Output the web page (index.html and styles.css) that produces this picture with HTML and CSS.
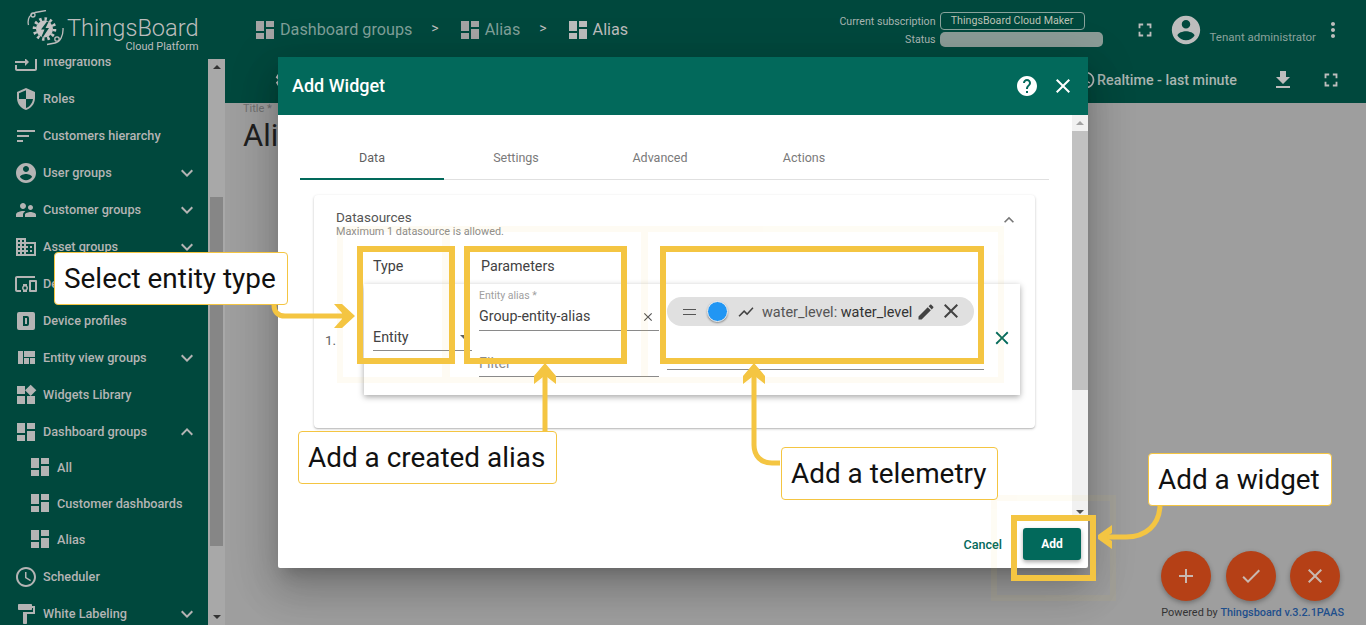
FILE: index.html
```html
<!DOCTYPE html>
<html lang="en">
<head>
    <meta charset="UTF-8">
    <title>ThingsBoard - Add Widget</title>
    <link rel="stylesheet" href="styles.css">
</head>
<body>
    <svg class="defs" width="0" height="0">
        <symbol id="i-dash" viewBox="0 0 24 24"><path d="M3 13h8V3H3v10zm0 8h8v-6H3v6zm10 0h8V11h-8v10zm0-18v6h8V3h-8z"/></symbol>
        <symbol id="i-input" viewBox="0 0 24 24"><path d="M21 3.01H3c-1.1 0-2 .9-2 2V9h2V4.99h18v14.03H3V15H1v4.01c0 1.1.9 1.98 2 1.98h18c1.1 0 2-.88 2-1.98v-14c0-1.11-.9-2-2-2zM11 16l4-4-4-4v3H1v2h10v3z"/></symbol>
        <symbol id="i-shield" viewBox="0 0 24 24"><path d="M12 1L3 5v6c0 5.55 3.84 10.74 9 12 5.16-1.26 9-6.45 9-12V5l-9-4zm0 10.99h7c-.53 4.12-3.28 7.79-7 8.94V12H5V6.3l7-3.11v8.8z"/></symbol>
        <symbol id="i-sort" viewBox="0 0 24 24"><path d="M3 18h6v-2H3v2zM3 6v2h18V6H3zm0 7h12v-2H3v2z"/></symbol>
        <symbol id="i-account" viewBox="0 0 24 24"><path d="M12 2C6.48 2 2 6.48 2 12s4.48 10 10 10 10-4.48 10-10S17.52 2 12 2zm0 3c1.66 0 3 1.34 3 3s-1.34 3-3 3-3-1.34-3-3 1.34-3 3-3zm0 14.2c-2.5 0-4.71-1.28-6-3.22.03-1.99 4-3.08 6-3.08 1.99 0 5.97 1.09 6 3.08-1.29 1.94-3.5 3.22-6 3.22z"/></symbol>
        <symbol id="i-people" viewBox="0 0 24 24"><path d="M16.5 12c1.38 0 2.49-1.12 2.49-2.5S17.88 7 16.5 7C15.12 7 14 8.12 14 9.5s1.12 2.5 2.5 2.5zM9 11c1.66 0 2.99-1.34 2.99-3S10.66 5 9 5C7.34 5 6 6.34 6 8s1.34 3 3 3zm7.5 3c-1.83 0-5.5.92-5.5 2.75V19h11v-2.25c0-1.83-3.67-2.75-5.5-2.75zM9 13c-2.33 0-7 1.17-7 3.5V19h7v-2.25c0-.85.33-2.34 2.37-3.47C10.5 13.1 9.66 13 9 13z"/></symbol>
        <symbol id="i-domain" viewBox="0 0 24 24"><path d="M12 7V3H2v18h20V7H12zM6 19H4v-2h2v2zm0-4H4v-2h2v2zm0-4H4V9h2v2zm0-4H4V5h2v2zm4 12H8v-2h2v2zm0-4H8v-2h2v2zm0-4H8V9h2v2zm0-4H8V5h2v2zm10 12h-8v-2h2v-2h-2v-2h2v-2h-2V9h8v10zm-2-8h-2v2h2v-2zm0 4h-2v2h2v-2z"/></symbol>
        <symbol id="i-devices" viewBox="0 0 24 24"><path d="M3 6h18V4H3c-1.1 0-2 .9-2 2v12c0 1.1.9 2 2 2h4v-2H3V6zm10 6H9v1.78c-.61.55-1 1.33-1 2.22s.39 1.67 1 2.22V20h4v-1.78c.61-.55 1-1.34 1-2.22s-.39-1.67-1-2.22V12zm-2 5.5c-.83 0-1.5-.67-1.5-1.5s.67-1.5 1.5-1.5 1.5.67 1.5 1.5-.67 1.5-1.5 1.5zM22 8h-6c-.5 0-1 .5-1 1v10c0 .5.5 1 1 1h6c.5 0 1-.5 1-1V9c0-.5-.5-1-1-1zm-1 10h-4v-8h4v8z"/></symbol>
        <symbol id="i-dbox" viewBox="0 0 24 24"><path fill-rule="evenodd" d="M9 7v10h4a2 2 0 0 0 2-2V9a2 2 0 0 0-2-2H9zm2 2h2v6h-2V9zM5 3h14a2 2 0 0 1 2 2v14a2 2 0 0 1-2 2H5a2 2 0 0 1-2-2V5a2 2 0 0 1 2-2z"/></symbol>
        <symbol id="i-quilt" viewBox="0 0 24 24"><path d="M10 18h5v-6h-5v6zm-6 0h5V5H4v13zm12 0h5v-6h-5v6zM10 5v6h11V5H10z"/></symbol>
        <symbol id="i-widgets" viewBox="0 0 24 24"><path d="M13 13v8h8v-8h-8zM3 21h8v-8H3v8zM3 3v8h8V3H3zm13.66-1.31L11 7.34 16.66 13l5.66-5.66-5.66-5.65z"/></symbol>
        <symbol id="i-clock" viewBox="0 0 24 24"><path d="M11.99 2C6.47 2 2 6.48 2 12s4.47 10 9.99 10C17.52 22 22 17.52 22 12S17.52 2 11.99 2zM12 20c-4.42 0-8-3.58-8-8s3.58-8 8-8 8 3.58 8 8-3.58 8-8 8zm.5-13H11v6l5.25 3.15.75-1.23-4.5-2.67z"/></symbol>
        <symbol id="i-paint" viewBox="0 0 24 24"><path d="M18 4V3c0-.55-.45-1-1-1H5c-.55 0-1 .45-1 1v4c0 .55.45 1 1 1h12c.55 0 1-.45 1-1V6h1v4H9v11c0 .55.45 1 1 1h2c.55 0 1-.45 1-1v-9h8V4h-3z"/></symbol>
        <symbol id="i-down" viewBox="0 0 24 24"><path d="M16.59 8.59L12 13.17 7.41 8.59 6 10l6 6 6-6z"/></symbol>
        <symbol id="i-up" viewBox="0 0 24 24"><path d="M12 8l-6 6 1.41 1.41L12 10.83l4.59 4.58L18 14z"/></symbol>
        <symbol id="i-full" viewBox="0 0 24 24"><path d="M7 14H5v5h5v-2H7v-3zm-2-4h2V7h3V5H5v5zm12 7h-3v2h5v-5h-2v3zM14 5v2h3v3h2V5h-5z"/></symbol>
        <symbol id="i-more" viewBox="0 0 24 24"><path d="M12 8c1.1 0 2-.9 2-2s-.9-2-2-2-2 .9-2 2 .9 2 2 2zm0 2c-1.1 0-2 .9-2 2s.9 2 2 2 2-.9 2-2-.9-2-2-2zm0 6c-1.1 0-2 .9-2 2s.9 2 2 2 2-.9 2-2-.9-2-2-2z"/></symbol>
        <symbol id="i-download" viewBox="0 0 24 24"><path d="M19 9h-4V3H9v6H5l7 7 7-7zM5 18v2h14v-2H5z"/></symbol>
        <symbol id="i-help" viewBox="0 0 24 24"><path d="M12 2C6.48 2 2 6.48 2 12s4.48 10 10 10 10-4.48 10-10S17.52 2 12 2zm1 17h-2v-2h2v2zm2.07-7.75l-.9.92C13.45 12.9 13 13.5 13 15h-2v-.5c0-1.1.45-2.1 1.17-2.83l1.24-1.26c.37-.36.59-.86.59-1.41 0-1.1-.9-2-2-2s-2 .9-2 2H8c0-2.21 1.79-4 4-4s4 1.79 4 4c0 .88-.36 1.68-.93 2.25z"/></symbol>
        <symbol id="i-close" viewBox="0 0 24 24"><path d="M19 6.41L17.59 5 12 10.59 6.41 5 5 6.41 10.59 12 5 17.59 6.41 19 12 13.41 17.59 19 19 17.59 13.41 12z"/></symbol>
        <symbol id="i-edit" viewBox="0 0 24 24"><path d="M3 17.25V21h3.75L17.81 9.94l-3.75-3.75L3 17.25zM20.71 7.04c.39-.39.39-1.02 0-1.41l-2.34-2.34c-.39-.39-1.02-.39-1.41 0l-1.83 1.83 3.75 3.75 1.83-1.83z"/></symbol>
        <symbol id="i-chart" viewBox="0 0 24 24"><path d="M3.5 18.49l6-6.01 4 4L22 6.92l-1.41-1.41-7.09 7.97-4-4L2 16.99z"/></symbol>
        <symbol id="i-add" viewBox="0 0 24 24"><path d="M19 13h-6v6h-2v-6H5v-2h6V5h2v6h6v2z"/></symbol>
        <symbol id="i-check" viewBox="0 0 24 24"><path d="M9 16.17L4.83 12l-1.42 1.41L9 19 21 7l-1.41-1.41z"/></symbol>
        <symbol id="i-gear" viewBox="0 0 24 24"><path d="M19.4 13c0-.3.1-.6.1-1s0-.7-.1-1l2.1-1.6c.2-.2.2-.4.1-.6l-2-3.5c-.1-.2-.4-.3-.6-.2l-2.5 1c-.5-.4-1.1-.7-1.7-1l-.4-2.6c0-.3-.2-.5-.5-.5h-4c-.3 0-.5.2-.5.4l-.4 2.7c-.6.2-1.1.6-1.7 1l-2.5-1c-.2-.1-.5 0-.6.2l-2 3.5c-.1.2-.1.4.1.6L4.6 11c0 .3-.1.6-.1 1s0 .7.1 1l-2.1 1.6c-.2.2-.2.4-.1.6l2 3.5c.1.2.4.3.6.2l2.5-1c.5.4 1.1.7 1.7 1l.4 2.6c0 .3.2.5.5.5h4c.3 0 .5-.2.5-.4l.4-2.7c.6-.3 1.2-.6 1.7-1l2.5 1c.2.1.5 0 .6-.2l2-3.5c.1-.2.1-.4-.1-.6L19.4 13zM12 15.5c-1.9 0-3.5-1.6-3.5-3.5s1.6-3.5 3.5-3.5 3.5 1.6 3.5 3.5-1.6 3.5-3.5 3.5z"/></symbol>
    </svg>

    <div class="app">
        <aside class="sidenav">
            <div class="logo">
                <svg class="logo-mark" viewBox="0 0 37 37">
                    <g fill="none" stroke="#bdbdbd" stroke-width="1.3">
                        <path d="M1.5 15C0 9 3 4 8 2.5L19 .5"/>
                        <circle cx="6" cy="5" r="2"/>
                        <path d="M36 18c.5 8-3 14-8 15l-8 1.5"/>
                        <circle cx="30" cy="29" r="2.2"/>
                    </g>
                    <circle cx="17.5" cy="19" r="8.5" fill="#c4c4c4"/>
                    <circle cx="17.5" cy="19" r="10" fill="none" stroke="#c4c4c4" stroke-width="3.6" stroke-dasharray="2.4 2.8"/>
                    <path d="M20 11.5l-6 8h3.5l-3 7 1.5.5 6-9h-3.5l3-6z" fill="#014a3e"/>
                </svg>
                <div class="logo-text">
                    <span class="logo-name">ThingsBoard</span>
                    <span class="logo-sub">Cloud Platform</span>
                </div>
            </div>
            <div class="side-body">
                <ul class="nav">
                    <li class="nav-row"><svg class="ic"><use href="#i-input"/></svg>Integrations</li>
                    <li class="nav-row"><svg class="ic"><use href="#i-shield"/></svg>Roles</li>
                    <li class="nav-row"><svg class="ic"><use href="#i-sort"/></svg>Customers hierarchy</li>
                    <li class="nav-row"><svg class="ic"><use href="#i-account"/></svg>User groups<svg class="ic chev"><use href="#i-down"/></svg></li>
                    <li class="nav-row"><svg class="ic"><use href="#i-people"/></svg>Customer groups<svg class="ic chev"><use href="#i-down"/></svg></li>
                    <li class="nav-row"><svg class="ic"><use href="#i-domain"/></svg>Asset groups<svg class="ic chev"><use href="#i-down"/></svg></li>
                    <li class="nav-row"><svg class="ic"><use href="#i-devices"/></svg>Device groups<svg class="ic chev"><use href="#i-down"/></svg></li>
                    <li class="nav-row"><svg class="ic"><use href="#i-dbox"/></svg>Device profiles</li>
                    <li class="nav-row"><svg class="ic"><use href="#i-quilt"/></svg>Entity view groups<svg class="ic chev"><use href="#i-down"/></svg></li>
                    <li class="nav-row"><svg class="ic"><use href="#i-widgets"/></svg>Widgets Library</li>
                    <li class="nav-row"><svg class="ic"><use href="#i-dash"/></svg>Dashboard groups<svg class="ic chev"><use href="#i-up"/></svg></li>
                    <li class="nav-row sub"><svg class="ic"><use href="#i-dash"/></svg>All</li>
                    <li class="nav-row sub"><svg class="ic"><use href="#i-dash"/></svg>Customer dashboards</li>
                    <li class="nav-row sub"><svg class="ic"><use href="#i-dash"/></svg>Alias</li>
                    <li class="nav-row"><svg class="ic"><use href="#i-clock"/></svg>Scheduler</li>
                    <li class="nav-row"><svg class="ic"><use href="#i-paint"/></svg>White Labeling<svg class="ic chev"><use href="#i-down"/></svg></li>
                </ul>
                <div class="side-scroll">
                    <span class="arrow-up"></span>
                    <div class="side-track"><div class="side-thumb"></div></div>
                    <span class="arrow-down"></span>
                </div>
            </div>
        </aside>

        <div class="main">
            <header class="topbar">
                <nav class="crumbs">
                    <svg class="ic"><use href="#i-dash"/></svg><span>Dashboard groups</span>
                    <b class="sep">&gt;</b>
                    <svg class="ic"><use href="#i-dash"/></svg><span>Alias</span>
                    <b class="sep">&gt;</b>
                    <svg class="ic lit"><use href="#i-dash"/></svg><span class="lit">Alias</span>
                </nav>
                <div class="plan">
                    <span class="plan-label">Current subscription</span>
                    <span class="plan-pill">ThingsBoard Cloud Maker</span>
                    <span class="plan-label">Status</span>
                    <span class="plan-status"></span>
                </div>
                <svg class="ic top-full"><use href="#i-full"/></svg>
                <svg class="ic top-user"><use href="#i-account"/></svg>
                <span class="top-role">Tenant administrator</span>
                <svg class="ic top-more"><use href="#i-more"/></svg>
            </header>
            <div class="toolbar">
                <svg class="ic tool-gear"><use href="#i-gear"/></svg>
                <svg class="ic tool-clock"><use href="#i-clock"/></svg>
                <span class="tool-time">Realtime - last minute</span>
                <svg class="ic tool-dl"><use href="#i-download"/></svg>
                <svg class="ic tool-full"><use href="#i-full"/></svg>
            </div>
            <div class="content">
                <div class="title-label">Title *</div>
                <div class="title-value">Alias</div>
                <div class="fabs">
                    <div class="fab-row">
                        <span class="fab"><svg class="ic"><use href="#i-add"/></svg></span>
                        <span class="fab"><svg class="ic"><use href="#i-check"/></svg></span>
                        <span class="fab"><svg class="ic"><use href="#i-close"/></svg></span>
                    </div>
                    <div class="powered">Powered by <b>Thingsboard v.3.2.1PAAS</b></div>
                </div>
            </div>
        </div>
    </div>

    <div class="modal">
        <div class="modal-head">
            <h2>Add Widget</h2>
            <svg class="ic head-help"><use href="#i-help"/></svg>
            <svg class="ic head-close"><use href="#i-close"/></svg>
        </div>
        <div class="modal-body">
            <div class="modal-pane">
                <div class="tabs">
                    <span class="tab active">Data</span>
                    <span class="tab">Settings</span>
                    <span class="tab">Advanced</span>
                    <span class="tab">Actions</span>
                </div>
                <section class="ds-card">
                    <svg class="ic ds-chev"><use href="#i-up"/></svg>
                    <div class="ds-title">Datasources</div>
                    <div class="ds-hint">Maximum 1 datasource is allowed.</div>
                    <div class="col-labels">
                        <span class="lbl-type">Type</span>
                        <span class="lbl-params">Parameters</span>
                    </div>
                    <div class="ds-line">
                        <span class="ds-index">1.</span>
                        <div class="row-card">
                            <div class="col-type">
                                <div class="field">Entity<i class="caret"></i></div>
                            </div>
                            <div class="col-params">
                                <div class="field-label">Entity alias *</div>
                                <div class="field">Group-entity-alias<svg class="ic field-x"><use href="#i-close"/></svg></div>
                                <div class="field filter">Filter</div>
                            </div>
                            <div class="col-keys">
                                <div class="chip">
                                    <span class="chip-drag"></span>
                                    <span class="chip-dot"></span>
                                    <svg class="ic chip-chart"><use href="#i-chart"/></svg>
                                    <span class="chip-text">water_level: <b>water_level</b></span>
                                    <svg class="ic chip-edit"><use href="#i-edit"/></svg>
                                    <svg class="ic chip-close"><use href="#i-close"/></svg>
                                </div>
                            </div>
                            <svg class="ic row-del"><use href="#i-close"/></svg>
                        </div>
                    </div>
                </section>
            </div>
            <div class="modal-scroll">
                <span class="arrow-up"></span>
                <div class="modal-track"><div class="modal-thumb"></div></div>
                <span class="arrow-down"></span>
            </div>
        </div>
        <div class="modal-foot">
            <span class="btn-cancel">Cancel</span>
            <span class="btn-add">Add</span>
        </div>
    </div>

    <!-- tutorial marks drawn on top of the screenshot -->
    <svg class="marks" viewBox="0 0 1366 625">
        <g class="faint">
            <rect x="340" y="229" width="105" height="151"/>
            <rect x="447" y="229" width="197" height="151"/>
            <rect x="645" y="229" width="356" height="151"/>
            <rect x="994" y="498" width="119" height="100"/>
        </g>
        <g class="boxes">
            <rect x="360" y="249" width="92" height="112"/>
            <rect x="467" y="249" width="157" height="112"/>
            <rect x="663" y="249" width="318" height="112"/>
            <rect x="1014" y="518" width="79" height="60"/>
        </g>
        <g class="lines">
            <path d="M274 305c0 7 4 11 11 11h64"/>
            <path d="M545 431v-56"/>
            <path d="M780 463h-8c-11 0-18-7-18-18v-70"/>
            <path d="M1160 506c-1 19-14 31-34 31h-24"/>
        </g>
        <g class="heads">
            <path d="M334 304h8l13 12-13 12h-8l8-9v-6z"/>
            <path d="M534 384v-8l11-13 11 13v8l-9-7h-4z"/>
            <path d="M743 384v-8l11-13 11 13v8l-9-7h-4z"/>
            <path d="M1112 525v8l-6 4 6 4v8l-14-10v-4z"/>
        </g>
    </svg>
    <div class="callout c-type">Select entity type</div>
    <div class="callout c-alias">Add a created alias</div>
    <div class="callout c-tele">Add a telemetry</div>
    <div class="callout c-add">Add a widget</div>
</body>
</html>
```

FILE: styles.css
```css
* {
    box-sizing: border-box;
}
html, body {
    margin: 0;
    height: 100%;
    overflow: hidden;
}
body {
    font-family: Roboto, "Liberation Sans", sans-serif;
    background-color: #9e9e9e;
    color: #333;
}
.defs {
    position: absolute;
}
.ic {
    width: 24px;
    height: 24px;
    fill: currentColor;
    flex: none;
}
.app {
    display: flex;
    height: 625px;
}

/* side menu */
.sidenav {
    width: 225px;
    flex: none;
    display: flex;
    flex-direction: column;
    background-color: #00483d;
    color: #bdbdbd;
}
.logo {
    height: 59px;
    flex: none;
    display: flex;
    padding: 10px 0 0 27px;
    position: relative;
    z-index: 1;
    background-color: #00483d;
}
.logo-mark {
    width: 37px;
    height: 37px;
}
.logo-text {
    display: flex;
    flex-direction: column;
    align-items: flex-end;
    margin-left: 3px;
    font-weight: 300;
}
.logo-name {
    font-size: 23.6px;
    line-height: 26px;
    margin-top: 5px;
}
.logo-sub {
    font-size: 10.9px;
    line-height: 12px;
    font-weight: 400;
}
.side-body {
    flex: 1;
    min-height: 0;
    display: flex;
}
.nav {
    list-style: none;
    margin: -16px 0 0;
    padding: 0;
    width: 208px;
    flex: none;
}
.nav-row {
    display: flex;
    align-items: center;
    height: 37px;
    padding-left: 14px;
    font-size: 12.7px;
    font-weight: 500;
    color: #b4b4b4;
}
.nav-row > .ic:first-child {
    margin-right: 5px;
}
.nav-row .chev {
    margin-left: auto;
    margin-right: 9px;
}
.nav-row.sub {
    height: 36px;
    padding-left: 28px;
    padding-bottom: 2px;
}
.side-scroll {
    width: 17px;
    flex: none;
    display: flex;
    flex-direction: column;
    align-items: center;
    background-color: #a8a8a8;
}
.side-track {
    flex: 1;
    width: 100%;
    padding-top: 122px;
}
.side-thumb {
    height: 349px;
    margin: 0 2px 0 2px;
    background-color: #868686;
}
.arrow-up, .arrow-down {
    width: 0;
    height: 0;
    flex: none;
    margin: 6px 0;
    border-left: 4px solid transparent;
    border-right: 4px solid transparent;
}
.arrow-up {
    border-bottom: 4px solid #333;
}
.arrow-down {
    border-top: 4px solid #333;
}

/* top bars */
.main {
    flex: 1;
    min-width: 0;
    display: flex;
    flex-direction: column;
}
.topbar {
    height: 59px;
    flex: none;
    display: flex;
    align-items: center;
    padding: 0 21px 0 28px;
    background-color: #00483d;
    color: #7f9f98;
}
.crumbs {
    display: flex;
    align-items: center;
    font-size: 16.2px;
    margin-left: 3px;
}
.crumbs .ic {
    margin-right: 3px;
    margin-left: -3px;
    color: #a4a4a4;
}
.crumbs .sep {
    font-weight: 400;
    font-size: 14px;
    margin: -4px 22px 0 19px;
    color: #bdbdbd;
}
.crumbs .lit {
    color: #bcbcbc;
}
.plan {
    display: grid;
    grid-template-columns: auto 145px 14px;
    column-gap: 4px;
    row-gap: 2px;
    align-items: center;
    justify-items: end;
    margin-left: auto;
    font-size: 10.65px;
    color: #a9b5b1;
}
.plan-label {
    grid-column: 1;
}
.plan-pill {
    grid-column: 2;
    justify-self: stretch;
    height: 18px;
    line-height: 16px;
    text-align: center;
    border: 1px solid #8aa39c;
    border-radius: 4px;
    color: #bdc2b5;
}
.plan-status {
    grid-column: 2 / 4;
    justify-self: stretch;
    height: 15px;
    border-radius: 5px;
    background-color: #8b9c97;
}
.top-full {
    margin-left: 31px;
    width: 22px;
    height: 22px;
    color: #bdbdbd;
}
.top-user {
    margin-left: 13px;
    width: 34px;
    height: 34px;
    color: #bdbdbd;
}
.top-role {
    margin: 14px 0 0 7px;
    font-size: 11.5px;
    color: #8ba29c;
}
.top-more {
    margin-left: 5px;
    color: #bdbdbd;
}
.toolbar {
    height: 44px;
    flex: none;
    display: flex;
    align-items: center;
    padding-bottom: 2px;
    background-color: #00483d;
    color: #bdbdbd;
}
.tool-gear {
    margin-left: 49px;
    width: 20px;
    height: 20px;
}
.tool-clock {
    margin-left: auto;
    width: 20px;
    height: 20px;
}
.tool-time {
    margin-left: 1px;
    font-size: 14.3px;
    font-weight: 500;
    color: #a9b5b1;
}
.tool-dl {
    margin-left: 34px;
}
.tool-full {
    margin: 0 24px 0 25px;
    width: 22px;
    height: 22px;
}
.content {
    flex: 1;
    padding: 0 22px 0 18px;
    display: flex;
    flex-direction: column;
}
.title-label {
    font-size: 11px;
    line-height: 11px;
    color: #6f6f6f;
}
.title-value {
    font-size: 31px;
    line-height: 36px;
    margin-top: 4px;
    color: #1f1f1f;
}
.fabs {
    margin-top: auto;
    display: flex;
    flex-direction: column;
    align-items: flex-end;
}
.fab-row {
    display: flex;
    gap: 14.5px;
    margin-right: 4px;
    padding-bottom: 6px;
}
.fab {
    width: 50px;
    height: 50px;
    border-radius: 50%;
    display: flex;
    align-items: center;
    justify-content: center;
    background-color: #b54016;
    color: #c9b8b0;
    box-shadow: 0 2px 5px rgba(0, 0, 0, .3);
}
.powered {
    font-size: 10.9px;
    line-height: 12px;
    margin: 0 0 6px;
    color: #333;
}
.powered b {
    font-weight: 500;
    color: #1e4f8c;
}

/* dialog */
.modal {
    position: absolute;
    left: 278px;
    top: 57px;
    width: 810px;
    height: 511px;
    display: flex;
    flex-direction: column;
    background-color: #fff;
    border-radius: 2px;
    box-shadow: 0 11px 15px -7px rgba(0, 0, 0, .2), 0 24px 38px 3px rgba(0, 0, 0, .14), 0 9px 46px 8px rgba(0, 0, 0, .12);
}
.modal-head {
    height: 58px;
    flex: none;
    display: flex;
    align-items: center;
    padding: 0 13px 0 14px;
    background-color: #02695b;
    color: #fff;
}
.modal-head h2 {
    margin: -2px 0 0;
    font-size: 18px;
    font-weight: 500;
}
.head-help {
    margin-left: auto;
}
.head-close {
    margin-left: 12px;
}
.modal-body {
    flex: 1;
    min-height: 0;
    display: flex;
}
.modal-pane {
    flex: 1;
    padding: 21px 23px 0 22px;
    overflow: hidden;
}
.modal-scroll {
    width: 16px;
    flex: none;
    display: flex;
    flex-direction: column;
    align-items: center;
    background-color: #f1f1f1;
}
.modal-scroll .arrow-up {
    border-bottom-color: #a3a3a3;
}
.modal-scroll .arrow-down {
    border-top-color: #505050;
}
.modal-track {
    flex: 1;
    width: 100%;
}
.modal-thumb {
    height: 259px;
    background-color: #c1c1c1;
}
.tabs {
    display: flex;
    height: 44px;
    border-bottom: 1px solid #e0e0e0;
}
.tab {
    width: 144px;
    text-align: center;
    font-size: 12.5px;
    line-height: 43px;
    color: #7a7a7a;
}
.tab.active {
    height: 44px;
    border-bottom: 2px solid #02695b;
    color: #5f5f5f;
}
.ds-card {
    position: relative;
    margin: 15px 14px 0 14px;
    height: 233px;
    padding: 14px 0 0 22px;
    background-color: #fff;
    border-radius: 4px;
    box-shadow: 0 1px 3px rgba(0, 0, 0, .2), 0 1px 1px rgba(0, 0, 0, .12);
}
.ds-chev {
    position: absolute;
    right: 16px;
    top: 15px;
    width: 20px;
    height: 20px;
    color: #777;
}
.ds-title {
    font-size: 13.5px;
    line-height: 16px;
    color: #555;
}
.ds-hint {
    font-size: 10.85px;
    line-height: 12px;
    margin-top: 1px;
    color: #8c8c8c;
}
.col-labels {
    display: flex;
    margin: 20px 0 0 37px;
    font-size: 14.3px;
    line-height: 16px;
    color: #424242;
}
.lbl-type {
    width: 108px;
}
.ds-line {
    display: flex;
    align-items: center;
    margin-top: 10px;
    margin-left: -11px;
}
.ds-index {
    width: 39px;
    font-size: 13.5px;
    color: #616161;
}
.row-card {
    width: 656px;
    height: 111px;
    flex: none;
    display: flex;
    padding-left: 9px;
    background-color: #fff;
    box-shadow: 0 2px 6px rgba(0, 0, 0, .35);
}
.field {
    position: relative;
    font-size: 14.3px;
    line-height: 16px;
    color: #424242;
    border-bottom: 1px solid #8a8a8a;
}
.col-type {
    width: 99px;
    padding-top: 45px;
    margin-right: 7px;
}
.col-type .field {
    height: 22px;
}
.caret {
    position: absolute;
    right: 4px;
    top: 6px;
    border-left: 4px solid transparent;
    border-right: 4px solid transparent;
    border-top: 4px solid #616161;
}
.col-params {
    width: 180px;
    padding-top: 6px;
    margin-right: 8px;
}
.field-label {
    font-size: 10.5px;
    line-height: 12px;
    color: #a0a0a0;
}
.col-params .field {
    height: 29px;
    padding-top: 6px;
}
.field-x {
    position: absolute;
    right: 4px;
    top: 8px;
    width: 14px;
    height: 14px;
    color: #555;
}
.col-params .field.filter {
    margin-top: 17px;
    height: 29px;
    padding-top: 7px;
    color: #8c8c8c;
}
.col-keys {
    width: 317px;
    height: 86px;
    padding-top: 13px;
    border-bottom: 1px solid #8a8a8a;
}
.chip {
    width: 307px;
    height: 29px;
    display: flex;
    align-items: center;
    padding-left: 16px;
    border-radius: 15px;
    background-color: #e0e0e0;
    color: #424242;
}
.chip-drag {
    width: 13px;
    height: 6px;
    flex: none;
    margin-top: 1px;
    border-top: 1px solid #555;
    border-bottom: 1px solid #555;
}
.chip-dot {
    width: 21px;
    height: 21px;
    flex: none;
    margin-left: 11px;
    border-radius: 50%;
    background-color: #2196f3;
    border: 1px solid #f3f3f3;
    box-shadow: 0 1px 2px rgba(0, 0, 0, .4);
}
.chip-chart {
    width: 18px;
    height: 18px;
    margin-left: 9px;
}
.chip-text {
    margin: 2px 0 0 7px;
    font-size: 14.45px;
    white-space: nowrap;
    color: #555;
}
.chip-text b {
    font-weight: 400;
    color: #333;
}
.chip-edit {
    width: 20px;
    height: 20px;
    margin-left: 4px;
}
.chip-close {
    margin-left: 3px;
    margin-top: -2px;
}
.row-del {
    width: 22px;
    height: 22px;
    margin: 43px 0 0 7px;
    color: #02695b;
}
.modal-foot {
    height: 48px;
    flex: none;
    display: flex;
    align-items: center;
    justify-content: flex-end;
    padding: 0 7px 0 0;
}
.btn-cancel {
    font-size: 12.6px;
    font-weight: 500;
    color: #02695b;
    margin-right: 21px;
}
.btn-add {
    width: 58px;
    height: 32px;
    line-height: 32px;
    text-align: center;
    font-size: 12px;
    font-weight: 700;
    border-radius: 3px;
    color: #fff;
    background-color: #02695b;
    box-shadow: 0 2px 4px rgba(0, 0, 0, .35);
}

/* tutorial marks */
.marks {
    position: absolute;
    left: 0;
    top: 0;
    width: 1366px;
    height: 625px;
    pointer-events: none;
}
.marks rect, .marks .lines path {
    fill: none;
    stroke: #f4c542;
    stroke-width: 6;
}
.marks .lines path {
    stroke-width: 5;
}
.marks .faint {
    opacity: .06;
}
.marks .heads path {
    fill: #f4c542;
}
.callout {
    position: absolute;
    height: 53px;
    line-height: 51px;
    padding: 0 11px 0 9px;
    font-size: 27.9px;
    color: #111;
    background-color: #fff;
    border: 1px solid #f4c542;
    border-radius: 4px;
    white-space: nowrap;
}
.c-type {
    left: 54px;
    top: 252px;
}
.c-alias {
    left: 298px;
    top: 431px;
}
.c-tele {
    left: 781px;
    top: 447px;
}
.c-add {
    left: 1148px;
    top: 453px;
}
```
